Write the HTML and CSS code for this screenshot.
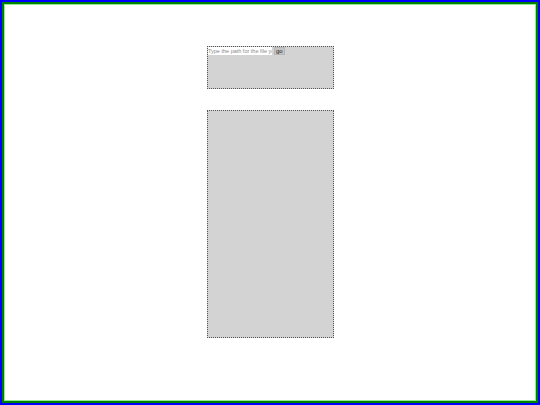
FILE: index.html
```html
<!DOCTYPE html>
<html>
<head>
<meta charset="utf-8">
<link rel="stylesheet" href="styles.css">
</head>
<body>
<div class="frame">
  <div class="column">
    <div class="panel top">
      <form class="pathform">
        <input class="path" type="text" placeholder="Type the path for the file you want">
        <button class="go" type="button">go</button>
      </form>
    </div>
    <div class="panel bottom"></div>
  </div>
</div>
</body>
</html>
```
FILE: styles.css
```css
html, body { margin: 0; padding: 0; }
body {
  width: 540px;
  height: 405px;
  box-sizing: border-box;
  border: 2px solid #0000ff;
  background: #fff;
  font-family: "Liberation Sans", Arial, sans-serif;
}
.frame {
  box-sizing: border-box;
  height: 100%;
  border: 2px solid #008000;
}
.column {
  box-sizing: border-box;
  height: 100%;
  border: 1px solid #90ee90;
  display: flex;
  flex-direction: column;
  align-items: center;
  padding-top: 41px;
  gap: 21px;
}
.panel {
  box-sizing: border-box;
  width: 127px;
  background: #d3d3d3;
  border: 1px dotted #555;
  margin-left: 1px;
}
.top { height: 43px; }
.bottom { height: 228px; }
.pathform { display: flex; align-items: center; gap: 2px; margin: 0; }
.path {
  box-sizing: border-box;
  width: 64px;
  height: 8px;
  font-size: 5.5px;
  padding: 0;
  margin: 0;
  border: 0;
  outline: none;
  background: #fff;
  font-family: "Liberation Sans", Arial, sans-serif;
}
.path::placeholder { color: #8a8a8a; }
.go {
  box-sizing: border-box;
  height: 8px;
  font-size: 6px;
  line-height: 6px;
  padding: 0 1px;
  margin: 0;
  border: 1px solid #b5b5b5;
  background: #c4c4c4;
  color: #222;
  font-family: "Liberation Sans", Arial, sans-serif;
}
```
